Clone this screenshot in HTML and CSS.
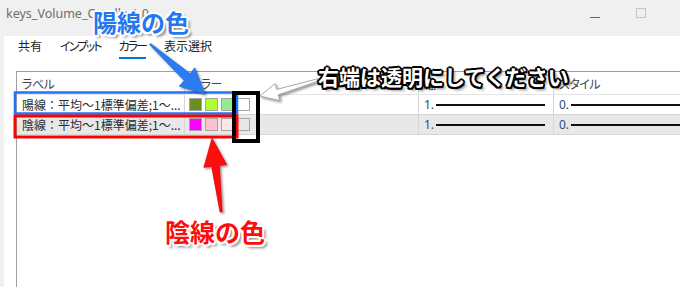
FILE: index.html
```html
<!DOCTYPE html>
<html lang="ja">
<head>
<meta charset="utf-8">
<title>keys_Volume_Candle 1.0</title>
<link rel="stylesheet" href="styles.css">
</head>
<body>
<div class="window">
  <div class="titlebar">
    <span class="title">keys_Volume_Candle 1.0</span>
    <div class="controls">
      <span class="ctl ctl-min"></span>
      <span class="ctl ctl-max"></span>
    </div>
  </div>
  <div class="body">
    <div class="strip"></div>
    <div class="main">
      <div class="tabs">
        <span class="tab">共有</span>
        <span class="tab tab-kana">インプット</span>
        <span class="tab tab-kana active">カラー</span>
        <span class="tab">表示選択</span>
      </div>
      <div class="table">
        <div class="row head">
          <div class="cell">ラベル</div>
          <div class="cell">カラー</div>
          <div class="cell">幅</div>
          <div class="cell">スタイル</div>
        </div>
        <div class="row">
          <div class="cell label">陽線：平均〜1標準偏差;1〜...</div>
          <div class="cell colors">
            <span class="sw sw-olive"></span>
            <span class="sw sw-lime"></span>
            <span class="sw sw-lightgreen"></span>
            <span class="sw sw-white"></span>
          </div>
          <div class="cell stroke"><span class="num">1.</span><span class="line"></span></div>
          <div class="cell stroke"><span class="num">0.</span><span class="line"></span></div>
        </div>
        <div class="row alt">
          <div class="cell label">陰線：平均〜1標準偏差;1〜...</div>
          <div class="cell colors">
            <span class="sw sw-magenta"></span>
            <span class="sw sw-pink"></span>
            <span class="sw sw-rose"></span>
            <span class="sw sw-clear"></span>
          </div>
          <div class="cell stroke"><span class="num">1.</span><span class="line"></span></div>
          <div class="cell stroke"><span class="num">0.</span><span class="line"></span></div>
        </div>
      </div>
    </div>
  </div>

  <svg class="annot" width="680" height="287" viewBox="0 0 680 287">
    <defs>
      <filter id="sh" x="-20%" y="-20%" width="140%" height="140%">
        <feDropShadow dx="1.5" dy="1.5" stdDeviation="1.2" flood-color="#000" flood-opacity="0.45"/>
      </filter>
    </defs>
    <!-- row boxes -->
    <rect x="15" y="92.5" width="222" height="21" fill="none" stroke="#1f74f5" stroke-width="2.5"/>
    <rect x="15" y="116" width="222" height="21" fill="none" stroke="#ff0000" stroke-width="3"/>
    <rect x="234" y="93" width="24" height="48" fill="none" stroke="#000" stroke-width="4"/>
    <!-- blue arrow -->
    <polygon filter="url(#sh)" fill="#2a7cf0" stroke="#1b63d0" stroke-width="0.6"
      points="149.5,44.6 184.2,80.6 179.2,86.2 205,94 194.8,67.8 190,73.6 150.5,43.4"/>
    <!-- grey/white arrow -->
    <polygon filter="url(#sh)" fill="#ffffff" stroke="#a8a8a8" stroke-width="1"
      points="318.3,81.2 278.2,94.8 279.8,100.6 260,96 275,83.6 276.6,89.4 317.7,78.8"/>
    <!-- red arrow -->
    <polygon filter="url(#sh)" fill="#ff0a0a" stroke="#d60000" stroke-width="0.6"
      points="220,212 211.6,166.4 203.8,167.4 212,138 226.6,164.6 219.4,165.4 222.2,212"/>
  </svg>

  <div class="note note-blue">陽線の色</div>
  <div class="note note-white">右端は透明にしてください</div>
  <div class="note note-red">陰線の色</div>
</div>
</body>
</html>
```

FILE: styles.css
```css
html, body {
  margin: 0;
  padding: 0;
}

body {
  width: 680px;
  height: 287px;
  overflow: hidden;
  background: #ffffff;
  font-family: "Noto Sans CJK JP", "Noto Sans", sans-serif;
}

.window {
  position: relative;
  width: 680px;
  height: 287px;
  display: flex;
  flex-direction: column;
}

/* title bar */
.titlebar {
  height: 36px;
  flex: none;
  background: #f0f0f0;
  display: flex;
  align-items: flex-start;
  padding: 4px 0 0 6px;
  box-sizing: border-box;
}

.title {
  font-family: "Noto Sans", "Open Sans", sans-serif;
  font-size: 12.5px;
  line-height: 20px;
  color: #6e6e6e;
}

.controls {
  margin-left: auto;
  display: flex;
  align-items: flex-start;
  gap: 36px;
  padding-top: 4px;
  width: 90px;
}

.ctl {
  display: block;
  box-sizing: border-box;
}

.ctl-min {
  width: 10px;
  height: 1px;
  margin-top: 9px;
  background: #666;
}

.ctl-max {
  width: 10px;
  height: 10px;
  border: 1px solid #c8c8c8;
}

/* body */
.body {
  flex: 1;
  display: flex;
  min-height: 0;
}

.strip {
  width: 4px;
  flex: none;
  background: #f0f0f0;
}

.main {
  flex: 1;
  display: flex;
  flex-direction: column;
  padding-left: 12px;
  min-width: 0;
}

/* tabs */
.tabs {
  height: 35px;
  flex: none;
  display: flex;
  align-items: flex-start;
  gap: 18px;
  padding-left: 2px;
  box-sizing: border-box;
}

.tab {
  font-size: 12px;
  line-height: 20px;
  color: #222;
  padding-bottom: 1px;
  border-bottom: 2px solid transparent;
  font-feature-settings: "palt";
}

.tab-kana {
  letter-spacing: -2px;
}

.tab.active {
  border-bottom-color: #0078d7;
}

/* table */
.table {
  flex: 1;
  border-left: 1px solid #a0a0a0;
  border-top: 1px solid #a0a0a0;
  width: 680px;
}

.row {
  display: grid;
  grid-template-columns: 168px 234px 135px 1fr;
  height: 20px;
  box-sizing: border-box;
  border-bottom: 1px solid #d6d6d6;
}

.row.head {
  height: 23px;
  border-bottom: 1px solid #e4e4e4;
}

.row.alt {
  background: #e8e8e8;
}

.cell {
  border-right: 1px solid #d6d6d6;
  padding-left: 5px;
  font-size: 12px;
  color: #333;
  display: flex;
  align-items: center;
  white-space: nowrap;
  overflow: hidden;
}

.head .cell {
  color: #444;
  font-feature-settings: "palt";
  letter-spacing: -0.5px;
}

.cell.label {
  padding-left: 5px;
  color: #2b2b2b;
}

.cell.colors {
  padding-left: 4px;
  gap: 3px;
}

.sw {
  display: block;
  width: 13px;
  height: 13px;
  box-sizing: border-box;
  border: 1px solid #a4a4a4;
}

.sw-olive { background: #6b8e23; }
.sw-lime { background: #adff2f; }
.sw-lightgreen { background: #90ee90; }
.sw-white { background: #ffffff; }
.sw-magenta { background: #ff00ff; }
.sw-pink { background: #ffc0cb; }
.sw-rose { background: #ffe4e1; }
.sw-clear { background: transparent; }

.cell.stroke {
  padding-left: 5px;
}

.num {
  font-family: "Noto Sans", sans-serif;
  font-size: 12px;
  color: #2c4a80;
  width: 12px;
}

.line {
  flex: 1;
  height: 2px;
  background: #111;
  margin-right: 8px;
}

/* annotations */
.annot {
  position: absolute;
  left: 0;
  top: 0;
  pointer-events: none;
}

.note {
  position: absolute;
  font-family: "Noto Sans CJK JP", sans-serif;
  font-weight: 700;
  line-height: 1;
  white-space: nowrap;
}

.note-blue {
  left: 93px;
  top: 10px;
  font-size: 24px;
  color: #2577ef;
  text-shadow:
    2px 0 0 #fff, -2px 0 0 #fff, 0 2px 0 #fff, 0 -2px 0 #fff,
    1.5px 1.5px 0 #fff, -1.5px 1.5px 0 #fff, 1.5px -1.5px 0 #fff, -1.5px -1.5px 0 #fff,
    3px 3px 3px rgba(0,0,0,0.55);
}

.note-white {
  left: 318px;
  top: 66px;
  font-size: 21px;
  color: #ffffff;
  text-shadow:
    2px 0 0 #000, -2px 0 0 #000, 0 2px 0 #000, 0 -2px 0 #000,
    1.5px 1.5px 0 #000, -1.5px 1.5px 0 #000, 1.5px -1.5px 0 #000, -1.5px -1.5px 0 #000,
    3px 3px 3px rgba(0,0,0,0.5);
}

.note-red {
  left: 165px;
  top: 219px;
  font-size: 25px;
  color: #ff0d0d;
  text-shadow:
    2px 0 0 #fff, -2px 0 0 #fff, 0 2px 0 #fff, 0 -2px 0 #fff,
    1.5px 1.5px 0 #fff, -1.5px 1.5px 0 #fff, 1.5px -1.5px 0 #fff, -1.5px -1.5px 0 #fff,
    3px 3px 3px rgba(0,0,0,0.55);
}
```
